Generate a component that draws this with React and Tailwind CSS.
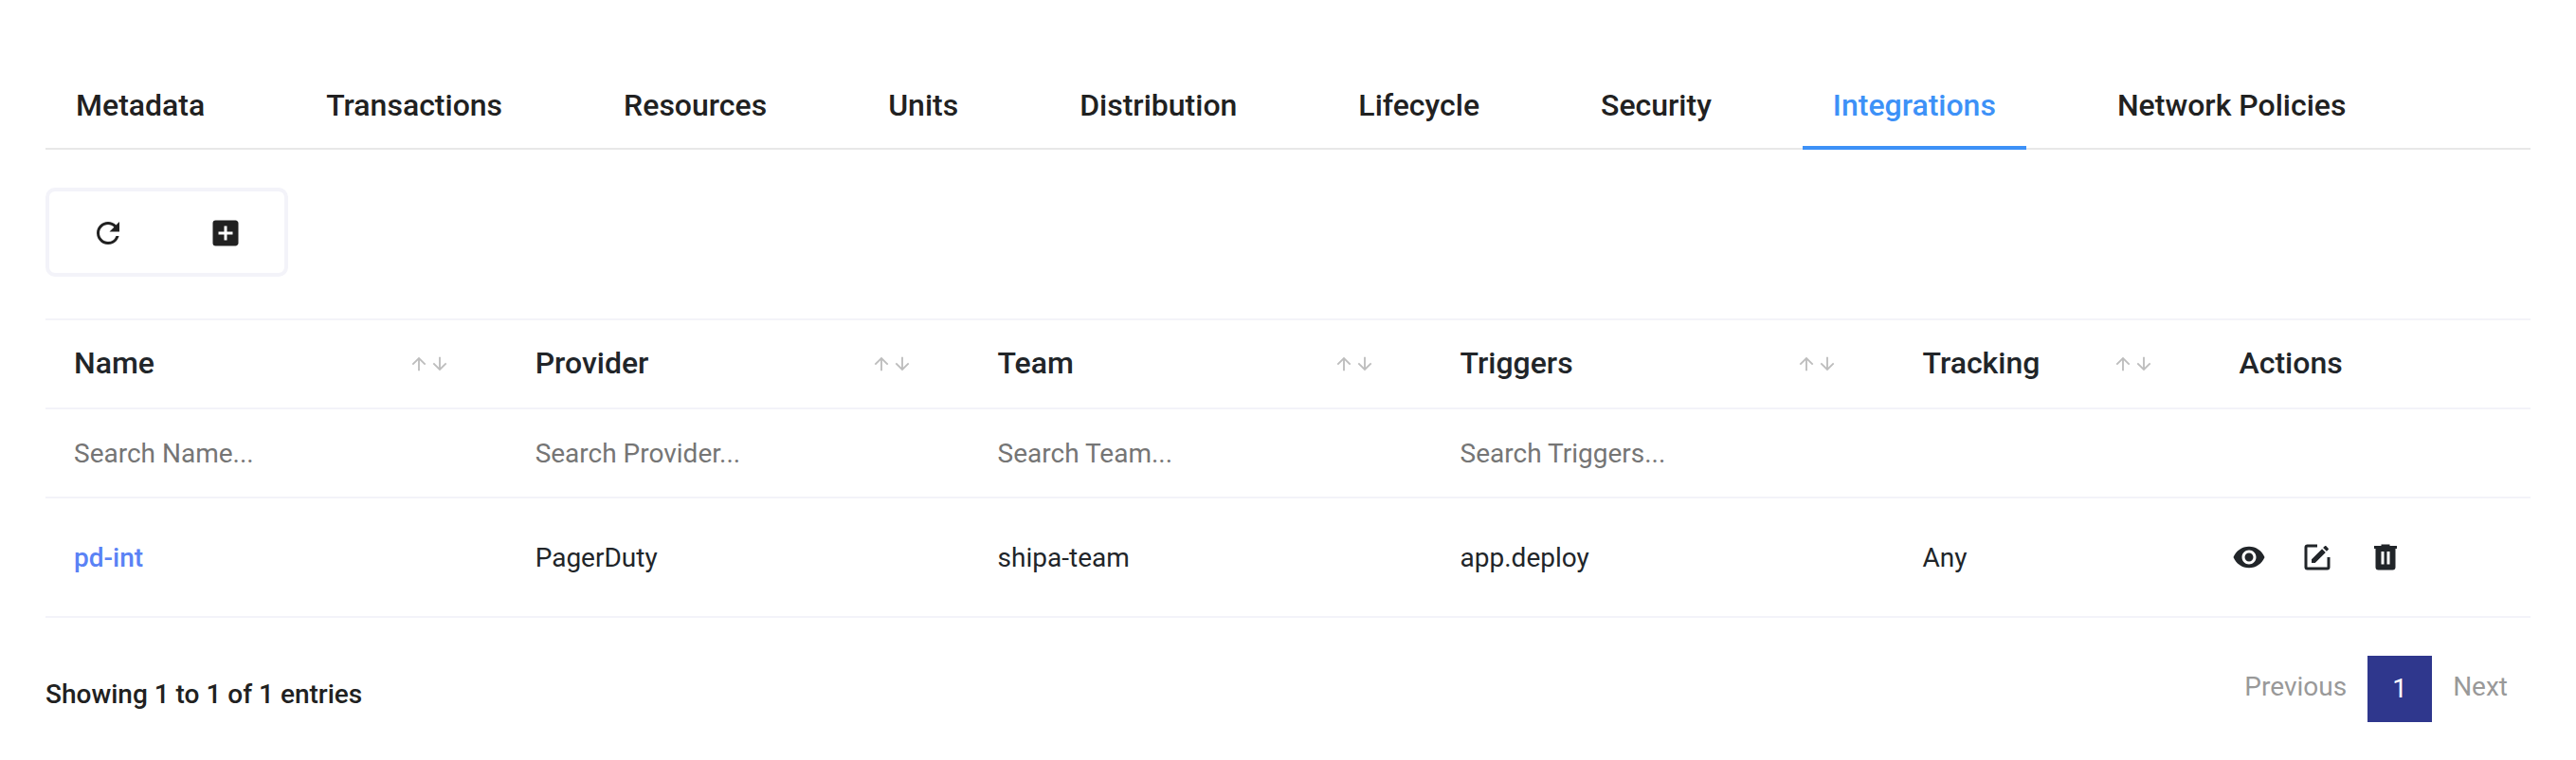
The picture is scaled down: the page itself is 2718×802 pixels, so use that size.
import React from 'react'
import { MdAddBox, MdArrowDownward, MdArrowUpward, MdRefresh, MdVisibility } from 'react-icons/md'

const tabs = [
  'Metadata',
  'Transactions',
  'Resources',
  'Units',
  'Distribution',
  'Lifecycle',
  'Security',
  'Integrations',
  'Network Policies',
]

const columns = [
  { name: 'Name', width: 'w-[18.56%]', sort: true, search: true },
  { name: 'Provider', width: 'w-[18.61%]', sort: true, search: true },
  { name: 'Team', width: 'w-[18.61%]', sort: true, search: true },
  { name: 'Triggers', width: 'w-[18.61%]', sort: true, search: true },
  { name: 'Tracking', width: 'w-[12.74%]', sort: true, search: false },
  { name: 'Actions', width: 'w-[12.87%]', sort: false, search: false },
]

const rows = [
  { name: 'pd-int', provider: 'PagerDuty', team: 'shipa-team', triggers: 'app.deploy', tracking: 'Any' },
]

function EditIcon() {
  return (
    <svg viewBox="0 0 24 24" fill="currentColor" className="size-9">
      <path d="M5,3C3.89,3 3,3.89 3,5V19A2,2 0 0,0 5,21H19A2,2 0 0,0 21,19V12H19V19H5V5H12V3H5M17.78,4C17.61,4 17.43,4.07 17.3,4.2L16.08,5.41L18.58,7.91L19.8,6.7C20.06,6.44 20.06,6 19.8,5.75L18.25,4.2C18.12,4.07 17.95,4 17.78,4M15.37,6.12L8,13.5V16H10.5L17.87,8.62L15.37,6.12Z" />
    </svg>
  )
}

function TrashIcon() {
  return (
    <svg viewBox="0 0 24 24" fill="currentColor" className="size-9">
      <path fillRule="evenodd" d="M9,3V4H4V6H5V19A2,2 0 0,0 7,21H17A2,2 0 0,0 19,19V6H20V4H15V3H9M9,8H11V17H9V8M13,8H15V17H13V8Z" />
    </svg>
  )
}

function App() {
  return (
    <div className="px-12 pt-16 pb-10 bg-white text-[28px] leading-9 text-[#212529] font-['Roboto',sans-serif]">
      <nav className="flex gap-16 h-[94px] border-b-2 border-[#e8e8e8] text-[32px] font-medium text-[#212121]">
        {tabs.map((tab) => (
          <a
            key={tab}
            href="#"
            className={
              tab === 'Integrations'
                ? 'flex items-center px-8 pt-1 -mb-0.5 whitespace-nowrap border-b-4 border-[#3d91f7] text-[#3d91f7]'
                : 'flex items-center px-8 pt-1 -mb-0.5 whitespace-nowrap border-b-4 border-transparent'
            }
          >
            {tab}
          </a>
        ))}
      </nav>

      <div className="flex w-fit mt-10 border-4 border-[#f3f3f9] rounded-[10px] text-[#212121]">
        <button aria-label="Refresh" className="h-[86px] px-11 pt-0.5">
          <MdRefresh className="size-9" />
        </button>
        <button aria-label="Add integration" className="h-[86px] px-11 pt-0.5">
          <MdAddBox className="size-9" />
        </button>
      </div>

      <table className="w-full mt-11 table-fixed border-collapse text-left">
        <thead>
          <tr className="h-[94px] border-y-2 border-[#f3f3f9] text-[32px]">
            {columns.map((col) => (
              <th key={col.name} className={`${col.width} pl-[30px] font-medium`}>
                <div className="flex items-center justify-between pr-[60px]">
                  <span className="pb-0.5">{col.name}</span>
                  {col.sort && (
                    <button aria-label={`Sort by ${col.name}`} className="flex text-[#bdbdbd]">
                      <MdArrowUpward className="size-[22px]" />
                      <MdArrowDownward className="size-[22px]" />
                    </button>
                  )}
                </div>
              </th>
            ))}
          </tr>
          <tr className="h-[94px] border-b-2 border-[#f3f3f9]">
            {columns.map((col) => (
              <td key={col.name} className="pl-[30px] pt-0.5">
                {col.search && (
                  <input
                    type="text"
                    aria-label={`Search ${col.name}`}
                    placeholder={`Search ${col.name}...`}
                    className="w-full placeholder:text-[#757575]"
                  />
                )}
              </td>
            ))}
          </tr>
        </thead>
        <tbody>
          {rows.map((row) => (
            <tr key={row.name} className="h-[126px] border-b-2 border-[#f3f3f9]">
              <td className="pl-[30px] pt-0.5">
                <a href="#" className="font-medium text-[#5a82f5]">{row.name}</a>
              </td>
              <td className="pl-[30px] pt-0.5">{row.provider}</td>
              <td className="pl-[30px] pt-0.5">{row.team}</td>
              <td className="pl-[30px] pt-0.5">{row.triggers}</td>
              <td className="pl-[30px] pt-0.5">{row.tracking}</td>
              <td className="pl-[22px]">
                <div className="flex gap-9">
                  <button aria-label="View"><MdVisibility className="size-9" /></button>
                  <button aria-label="Edit"><EditIcon /></button>
                  <button aria-label="Delete"><TrashIcon /></button>
                </div>
              </td>
            </tr>
          ))}
        </tbody>
      </table>

      <div className="flex items-center justify-between mt-10">
        <p className="pt-3 font-medium text-[#212121]">Showing 1 to 1 of 1 entries</p>
        <div className="flex items-center pr-6 gap-[22px] text-[#999999]">
          <button className="pb-1">Previous</button>
          <button className="w-[68px] h-[70px] bg-[#2f378d] text-white">1</button>
          <button className="pb-1">Next</button>
        </div>
      </div>
    </div>
  )
}

export default App
